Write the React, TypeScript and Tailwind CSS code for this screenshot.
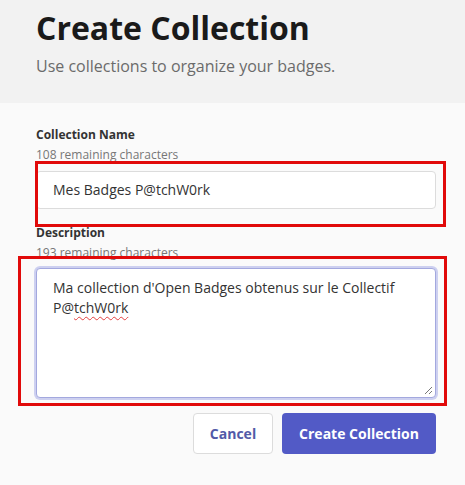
import React from "react";

const RedBox: React.FC<{ className: string }> = ({ className }) => (
  <div className={`pointer-events-none absolute border-[3px] border-[#e10a0a] ${className}`} />
);

const App: React.FC = () => {
  return (
    <div className="min-h-[485px] bg-[#fafafa] font-['Open_Sans',sans-serif]">
      <header className="h-[103px] bg-[#f2f2f2] pl-9 pt-2">
        <h1 className="text-[32px] font-bold leading-[40px] text-[#1a1a1a]">Create Collection</h1>
        <p className="mt-[6px] text-[16px] leading-6 text-[#6b6b6b]">
          Use collections to organize your badges.
        </p>
      </header>

      <main className="pl-9 pr-[29px] pt-6">
        <label className="block text-xs font-bold leading-4 text-[#333]">Collection Name</label>
        <p className="mt-1 text-xs leading-4 text-[#777]">108 remaining characters</p>
        <div className="relative mt-2">
          <div className="h-[38px] rounded border border-[#dcdcdc] bg-white pl-4 text-sm leading-[36px] text-[#333]">
            Mes Badges P@tchW0rk
          </div>
          <RedBox className="-left-px -top-[10px] -right-[10px] -bottom-[18px]" />
        </div>

        <label className="mt-4 block text-xs font-bold leading-4 text-[#333]">Description</label>
        <p className="mt-1 text-xs leading-4 text-[#777]">193 remaining characters</p>
        <div className="relative mt-[7px]">
          <div className="relative h-[130px] rounded border border-[#a3a8de] bg-white px-4 pt-[9px] text-sm leading-5 text-[#333] ring-2 ring-[#cdd0f0]">
            Ma collection d'Open Badges obtenus sur le Collectif P@
            <span className="underline decoration-[#e34040] decoration-wavy decoration-1 underline-offset-[3px]">
              tchW0rk
            </span>
            <svg
              className="absolute bottom-[2px] right-[2px]"
              width="9"
              height="9"
              viewBox="0 0 9 9"
              fill="none"
              stroke="#777"
              strokeWidth="1"
            >
              <path d="M8 1L1 8M8 5L5 8" />
            </svg>
          </div>
          <RedBox className="-left-[18px] -top-[12px] -right-[11px] -bottom-[8px]" />
        </div>

        <div className="mt-[15px] flex justify-end gap-[9px]">
          <button className="h-[41px] w-[80px] rounded border border-[#dcdcdc] bg-white text-sm font-bold text-[#525aa8]">
            Cancel
          </button>
          <button className="h-[41px] w-[154px] rounded bg-[#525ac6] text-sm font-bold text-white">
            Create Collection
          </button>
        </div>
      </main>
    </div>
  );
};

export default App;
